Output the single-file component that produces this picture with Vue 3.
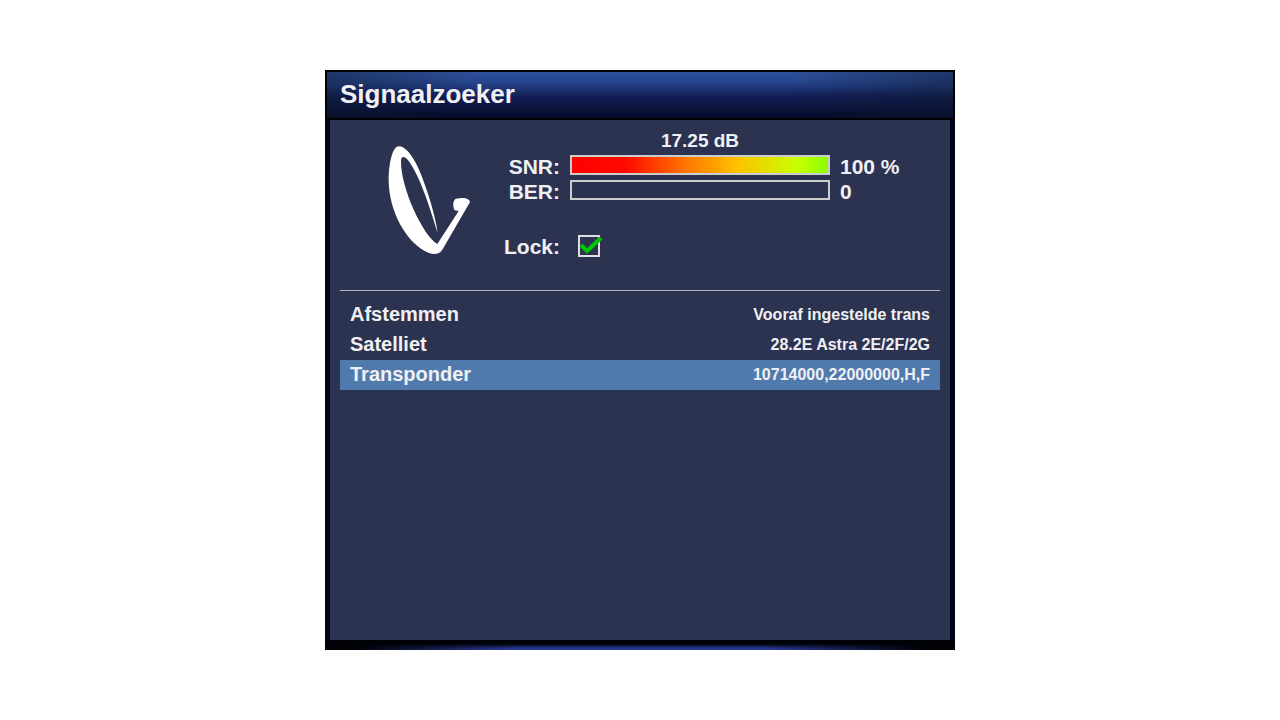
<script setup>
import { ref } from 'vue'

const meters = [
  { id: 'snr', label: 'SNR:', percent: 100, text: '100 %' },
  { id: 'ber', label: 'BER:', percent: 0, text: '0' },
]
const settings = [
  { name: 'Afstemmen', value: 'Vooraf ingestelde trans' },
  { name: 'Satelliet', value: '28.2E Astra 2E/2F/2G' },
  { name: 'Transponder', value: '10714000,22000000,H,F' },
]
const selected = ref(2)
const locked = ref(true)
</script>

<template>
  <main class="screen">
    <section class="window" aria-labelledby="window-title">
      <header class="titlebar">
        <h1 id="window-title">Signaalzoeker</h1>
      </header>

      <div class="content">
        <div class="signal">
          <svg class="dish" viewBox="0 0 300 375" aria-hidden="true">
            <path
              fill="#fff"
              d="M57 34C36 34 26 90 26 137C27 230 80 325 145 353C163 360 178 358 187 344L270 201C268 192 256 188 245 189L228 191C219 194 217 213 224 226L236 228L172 327C128 300 63 160 63 80C63 60 75 64 86 78C122 128 150 220 173 294C167 240 132 130 107 83C90 52 72 34 57 34Z"
            />
          </svg>

          <div class="readings">
            <output class="decibel">17.25 dB</output>
            <template v-for="m in meters" :key="m.id">
              <span :id="m.id" class="label">{{ m.label }}</span>
              <div
                class="bar"
                role="meter"
                :aria-labelledby="m.id"
                :aria-valuenow="m.percent"
                aria-valuemin="0"
                aria-valuemax="100"
              >
                <div class="mask" :style="{ width: 100 - m.percent + '%' }"></div>
              </div>
              <span class="amount">{{ m.text }}</span>
            </template>
            <label class="label lock-label" for="lock">Lock:</label>
            <span class="lock">
              <input id="lock" v-model="locked" type="checkbox" />
              <svg v-if="locked" class="tick" viewBox="0 0 26 24" aria-hidden="true">
                <path d="M3 9L9 15L23 2" fill="none" stroke="#00c800" stroke-width="4" />
              </svg>
            </span>
          </div>
        </div>

        <ul class="settings">
          <li v-for="(s, i) in settings" :key="s.name">
            <button
              type="button"
              class="row"
              :class="{ active: i === selected }"
              @click="selected = i"
            >
              <span>{{ s.name }}</span>
              <span class="value">{{ s.value }}</span>
            </button>
          </li>
        </ul>
      </div>

      <footer class="base"></footer>
    </section>
  </main>
</template>

<style>
body {
  background: #fff;
}
</style>

<style scoped>
.screen {
  box-sizing: border-box;
  min-height: 100vh;
  padding: 70px 20px;
  display: flex;
  justify-content: center;
  font-family: "Liberation Sans", Arial, sans-serif;
  font-weight: bold;
  color: #f0f0f4;
}
.window {
  width: 100%;
  max-width: 630px;
  display: flex;
  flex-direction: column;
}
.titlebar {
  border: 2px solid #000;
  padding: 7px 13px 9px;
  background:
    linear-gradient(to right, rgba(14, 24, 44, 0.45), transparent 24%, transparent 74%, rgba(14, 24, 44, 0.45)),
    linear-gradient(#2e529c, #26438a 25%, #121f57 52%, #0c1540 75%, #040b2a);
}
h1 {
  margin: 0;
  font-size: 26px;
  line-height: 30px;
}
.content {
  flex: 1;
  border: solid #00041a;
  border-width: 0 5px;
  padding: 10px;
  background: #2b3351;
}
.signal {
  display: flex;
  align-items: flex-start;
  min-height: 160px;
  border-bottom: 1px solid #b4b6c0;
}
.dish {
  width: 100px;
  height: 125px;
  flex: none;
  margin: 5px 0 0 40px;
}
.readings {
  flex: 1;
  display: grid;
  grid-template-columns: 80px minmax(0, 260px) 1fr;
  column-gap: 10px;
  grid-auto-rows: 25px;
  font-size: 21px;
  line-height: 24px;
}
.decibel {
  grid-column: 2;
  text-align: center;
  font-size: 19px;
  line-height: 22px;
}
.label {
  grid-column: 1;
  text-align: right;
}
.bar {
  box-sizing: border-box;
  height: 20px;
  border: 2px solid #ccc;
  display: flex;
  justify-content: flex-end;
  background: linear-gradient(to right, #f00, #ff0a00 21%, #ff7800 45%, #ffc000 64%, #c8ff00 88%, #8cff00);
}
.mask {
  background: #2b3351;
}
.lock-label,
.lock {
  grid-row: 5;
  margin-top: 5px;
}
.lock {
  position: relative;
  padding-left: 8px;
}
.lock input {
  appearance: none;
  display: block;
  box-sizing: border-box;
  width: 22px;
  height: 22px;
  margin: 0;
  border: 2px solid #dedee4;
}
.tick {
  position: absolute;
  left: 8px;
  top: 1px;
  width: 26px;
  height: 24px;
  pointer-events: none;
}
.settings {
  list-style: none;
  margin: 9px 0 0;
  padding: 0;
}
.row {
  width: 100%;
  border: 0;
  padding: 0 10px;
  background: none;
  display: flex;
  justify-content: space-between;
  font: inherit;
  font-size: 20px;
  line-height: 28px;
  height: 30px;
  color: inherit;
  text-align: left;
}
.active {
  background: #517aac;
}
.value {
  font-size: 16px;
  line-height: 30px;
}
.base {
  height: 10px;
  background:
    linear-gradient(to right, #000208 5%, transparent 30%, transparent 70%, #000208 95%),
    linear-gradient(#000208 40%, #162058 65%, #2a3a98 90%);
}
</style>
